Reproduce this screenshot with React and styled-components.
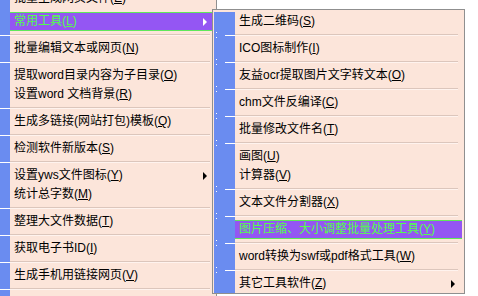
import React from "react";
import styled, { createGlobalStyle } from "styled-components";

const Global = createGlobalStyle`
  html, body { margin: 0; padding: 0; background: #ffffff; overflow: hidden; }
  body {
    font-family: "Liberation Sans", "Noto Sans CJK SC", sans-serif;
    font-size: 12px;
    color: #000;
  }
`;

const Screen = styled.div`
  position: relative;
  width: 478px;
  height: 296px;
  overflow: hidden;
  background: #ffffff;
`;

const Menu = styled.div`
  box-sizing: border-box;
  display: flex;
  flex-direction: column;
  background: #fce5da;
  border: 1px solid #8f8f8f;
  padding: 2px 2px 0 1px;
  width: ${(p) => p.$width}px;
`;

const MainMenu = styled(Menu)`
  margin-left: -13px;
  margin-top: -14px;
`;

const SubMenu = styled(Menu)`
  position: absolute;
  left: 212px;
  top: 9px;
`;

const Row = styled.div`
  display: grid;
  grid-template-columns: 21px 1fr 16px;
  height: 19px;
`;

const Strip = styled.div`
  background: #6a8cf0;
`;

const Label = styled.div`
  display: flex;
  align-items: center;
  padding-left: 4px;
  white-space: nowrap;
  line-height: 19px;
  color: ${(p) => (p.$hl ? "#52ff4a" : "#000")};
  background: ${(p) => (p.$hl ? "#9456f3" : "transparent")};
  box-shadow: ${(p) =>
    p.$hl ? "inset 0 1px 0 #5fe85a, inset 0 -1px 0 #5fe85a" : "none"};
`;

const ArrowCell = styled.div`
  display: flex;
  align-items: center;
  justify-content: center;
  background: ${(p) => (p.$hl ? "#9456f3" : "transparent")};
  box-shadow: ${(p) =>
    p.$hl ? "inset 0 1px 0 #5fe85a, inset 0 -1px 0 #5fe85a" : "none"};
`;

const Arrow = styled.span`
  width: 0;
  height: 0;
  margin-right: 2px;
  border-top: 4px solid transparent;
  border-bottom: 4px solid transparent;
  border-left: 4px solid ${(p) => (p.$hl ? "#ffffff" : "#000000")};
`;

const Key = styled.span`
  text-decoration: underline;
`;

const Sep = styled.div`
  display: grid;
  grid-template-columns: 21px 1fr;
  height: 8px;
`;

const Gap = styled.div`
  display: grid;
  grid-template-columns: 21px 1fr;
  height: 4px;
`;

const SepStrip = styled.div`
  position: relative;
  background: #6a8cf0;
  &::before {
    content: "";
    position: absolute;
    left: 2px;
    top: 1px;
    width: 1px;
    height: 1px;
    background: #ffffff;
    box-shadow: 0 5px 0 #ffffff;
  }
  &::after {
    content: "";
    position: absolute;
    left: 11px;
    top: 4px;
    width: 10px;
    height: 1px;
    background: #ffffff;
  }
`;

const SepLine = styled.div`
  margin-top: 3px;
  margin-right: 4px;
  height: 1px;
  background: #dcc6bc;
  border-bottom: 1px solid #fff3ee;
`;

const mainItems = [
  { t: "批量生成网页文件", k: "E" },
  "gap",
  { t: "常用工具", k: "L", hl: true, arrow: true },
  "sep",
  { t: "批量编辑文本或网页", k: "N" },
  "sep",
  { t: "提取word目录内容为子目录", k: "O" },
  { t: "设置word 文档背景", k: "R" },
  "sep",
  { t: "生成多链接(网站打包)模板", k: "Q" },
  "sep",
  { t: "检测软件新版本", k: "S" },
  "sep",
  { t: "设置yws文件图标", k: "Y", arrow: true },
  { t: "统计总字数", k: "M" },
  "sep",
  { t: "整理大文件数据", k: "T" },
  "sep",
  { t: "获取电子书ID", k: "I" },
  "sep",
  { t: "生成手机用链接网页", k: "V" },
  "sep",
  { t: "", k: "" },
];

const subItems = [
  { t: "生成二维码", k: "S" },
  "sep",
  { t: "ICO图标制作", k: "I" },
  "sep",
  { t: "友益ocr提取图片文字转文本", k: "O" },
  "sep",
  { t: "chm文件反编译", k: "C" },
  "sep",
  { t: "批量修改文件名", k: "T" },
  "sep",
  { t: "画图", k: "U" },
  { t: "计算器", k: "V" },
  "sep",
  { t: "文本文件分割器", k: "X" },
  "sep",
  { t: "图片压缩、大小调整批量处理工具", k: "Y", hl: true },
  "sep",
  { t: "word转换为swf或pdf格式工具", k: "W" },
  "sep",
  { t: "其它工具软件", k: "Z", arrow: true },
];

function Items({ items }) {
  return items.map((it, i) => {
    if (it === "sep")
      return (
        <Sep key={i}>
          <SepStrip />
          <SepLine />
        </Sep>
      );
    if (it === "gap")
      return (
        <Gap key={i}>
          <Strip />
        </Gap>
      );
    return (
      <Row key={i}>
        <Strip />
        <Label $hl={it.hl}>
          {it.t}
          {it.k && (
            <>
              (<Key>{it.k}</Key>)
            </>
          )}
        </Label>
        <ArrowCell $hl={it.hl}>{it.arrow && <Arrow $hl={it.hl} />}</ArrowCell>
      </Row>
    );
  });
}

export default function App() {
  return (
    <Screen>
      <Global />
      <MainMenu $width={230}>
        <Items items={mainItems} />
      </MainMenu>
      <SubMenu $width={253}>
        <Items items={subItems} />
      </SubMenu>
    </Screen>
  );
}
